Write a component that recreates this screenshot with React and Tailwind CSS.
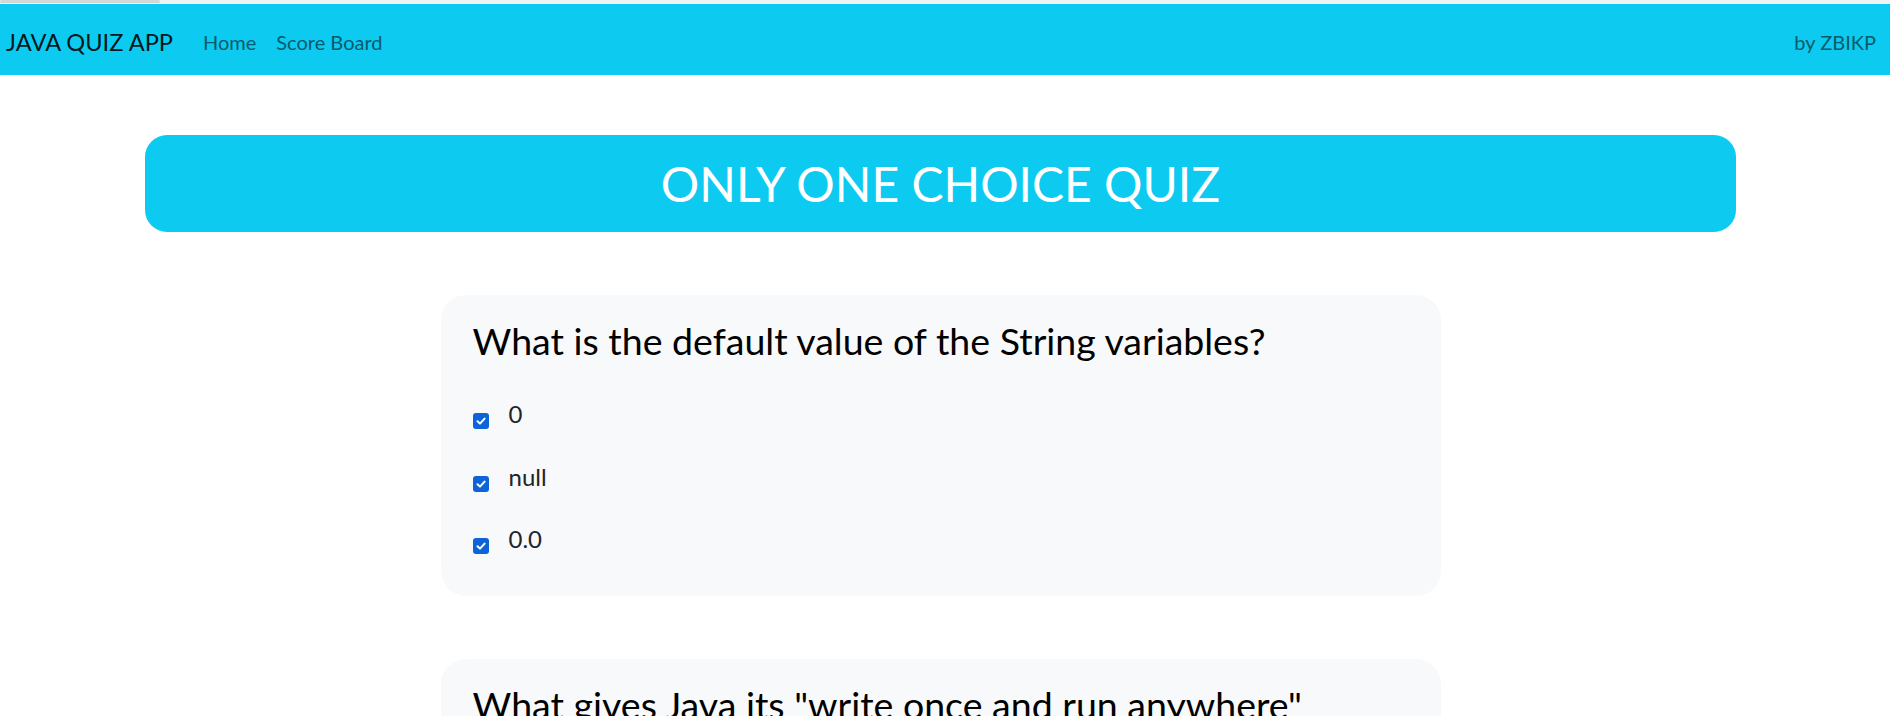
import React from 'react';

const quizzes = [
  {
    question: 'What is the default value of the String variables?',
    options: ['0', 'null', '0.0'],
  },
  {
    question: 'What gives Java its "write once and run anywhere" nature?',
    options: ['Bytecode', 'JVM', 'JRE'],
  },
];

const CheckBox = () => (
  <span className="mt-[17px] flex h-4 w-4 shrink-0 items-center justify-center rounded-[3px] bg-[#0d63d8]">
    <svg width="12" height="12" viewBox="0 0 12 12" fill="none">
      <path d="M2.5 6.2 L5 8.6 L9.6 3.6" stroke="#fff" strokeWidth="2" strokeLinecap="round" strokeLinejoin="round" />
    </svg>
  </span>
);

const QuizCard = ({ quiz }) => (
  <div className="mx-auto w-[1000px] rounded-[25px] bg-[#f8f9fa] px-[32px] pt-[23px] pb-[39px]">
    <h2 className="text-[37.5px] leading-[1.2] text-black">{quiz.question}</h2>
    <div className="mt-[33px] flex flex-col gap-[26.5px]">
      {quiz.options.map((opt) => (
        <label key={opt} className="flex items-start gap-[20px]">
          <CheckBox />
          <span className="text-[24px] leading-[36px] text-[#212529]">{opt}</span>
        </label>
      ))}
    </div>
  </div>
);

export default function App() {
  return (
    <div className="min-h-screen bg-white" style={{ fontFamily: 'Lato, "Open Sans", sans-serif' }}>
      {/* browser strip at the very top */}
      <div className="h-[4px] bg-[#f3f3f3]">
        <div className="h-[3px] w-[160px] rounded-full bg-[#d6d6d6]"></div>
      </div>

      <nav className="flex h-[71px] items-center bg-[#0dcaf0] pt-[5px] pl-[6px] pr-[14px]">
        <span className="mt-[1px] text-[23.6px] text-black/90">JAVA QUIZ APP</span>
        <div className="ml-[30px] flex gap-[20px] text-[20px] text-[#065b6c]">
          <a href="#">Home</a>
          <a href="#">Score Board</a>
        </div>
        <span className="ml-auto text-[20px] text-[#065b6c]">by ZBIKP</span>
      </nav>

      <div className="w-[1881px] pt-[60px]">
        <div className="mx-auto flex h-[97px] w-[1591px] items-center justify-center rounded-[22px] bg-[#0dcaf0]">
          <h1 className="text-[48px] leading-[1.2] text-white">ONLY ONE CHOICE QUIZ</h1>
        </div>

        <div className="mt-[63px] flex flex-col gap-[63px]">
          {quizzes.map((quiz, i) => (
            <QuizCard key={i} quiz={quiz} />
          ))}
        </div>
      </div>
    </div>
  );
}
